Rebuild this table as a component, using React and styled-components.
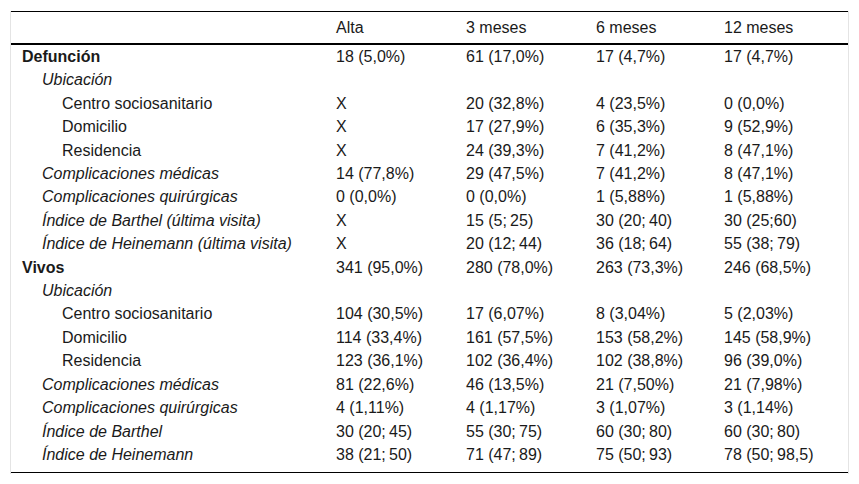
import React from "react";
import styled, { createGlobalStyle } from "styled-components";

const Global = createGlobalStyle`
  html, body {
    margin: 0;
    padding: 0;
    background: #ffffff;
  }
  body {
    font-family: "Liberation Sans", Arial, sans-serif;
    color: #1a1a1a;
  }
`;

const Frame = styled.div`
  margin: 11px 10px 0 10px;
  width: 837px;
  border-left: 1px solid #e4e4e4;
  border-right: 1px solid #e4e4e4;
  padding-bottom: 1px;
`;

const Table = styled.table`
  width: 837px;
  table-layout: fixed;
  border-collapse: collapse;
  border-top: 1px solid #000;
  border-bottom: 1px solid #000;
  font-size: 16px;
  color: #1a1a1a;
`;

const HeadCell = styled.th`
  text-align: left;
  font-weight: normal;
  padding: 6px 11px;
  line-height: 19px;
  border-bottom: 2px solid #000;
  white-space: nowrap;
`;

const Row = styled.tr`
  &:last-child td {
    padding-bottom: 8px;
  }
`;

const LabelCell = styled.td`
  padding: 2px 11px 2px ${(p) => 11 + p.$indent * 20}px;
  line-height: 19.4px;
  font-weight: ${(p) => (p.$kind === "group" ? "bold" : "normal")};
  font-style: ${(p) => (p.$kind === "sub" ? "italic" : "normal")};
  white-space: nowrap;
`;

const ValueCell = styled.td`
  padding: 2px 11px;
  line-height: 19.4px;
  white-space: nowrap;
`;

const T = "\u2009";

const headers = ["", "Alta", "3 meses", "6 meses", "12 meses"];
const widths = [314, 130, 130, 128, 135];

const rows = [
  { label: "Defunción", kind: "group", indent: 0, v: ["18 (5,0%)", "61 (17,0%)", "17 (4,7%)", "17 (4,7%)"] },
  { label: "Ubicación", kind: "sub", indent: 1, v: ["", "", "", ""] },
  { label: "Centro sociosanitario", kind: "item", indent: 2, v: ["X", "20 (32,8%)", "4 (23,5%)", "0 (0,0%)"] },
  { label: "Domicilio", kind: "item", indent: 2, v: ["X", "17 (27,9%)", "6 (35,3%)", "9 (52,9%)"] },
  { label: "Residencia", kind: "item", indent: 2, v: ["X", "24 (39,3%)", "7 (41,2%)", "8 (47,1%)"] },
  { label: "Complicaciones médicas", kind: "sub", indent: 1, v: ["14 (77,8%)", "29 (47,5%)", "7 (41,2%)", "8 (47,1%)"] },
  { label: "Complicaciones quirúrgicas", kind: "sub", indent: 1, v: ["0 (0,0%)", "0 (0,0%)", "1 (5,88%)", "1 (5,88%)"] },
  { label: "Índice de Barthel (última visita)", kind: "sub", indent: 1, v: ["X", `15 (5;${T}25)`, `30 (20;${T}40)`, "30 (25;60)"] },
  { label: "Índice de Heinemann (última visita)", kind: "sub", indent: 1, v: ["X", `20 (12;${T}44)`, `36 (18;${T}64)`, `55 (38;${T}79)`] },
  { label: "Vivos", kind: "group", indent: 0, v: ["341 (95,0%)", "280 (78,0%)", "263 (73,3%)", "246 (68,5%)"] },
  { label: "Ubicación", kind: "sub", indent: 1, v: ["", "", "", ""] },
  { label: "Centro sociosanitario", kind: "item", indent: 2, v: ["104 (30,5%)", "17 (6,07%)", "8 (3,04%)", "5 (2,03%)"] },
  { label: "Domicilio", kind: "item", indent: 2, v: ["114 (33,4%)", "161 (57,5%)", "153 (58,2%)", "145 (58,9%)"] },
  { label: "Residencia", kind: "item", indent: 2, v: ["123 (36,1%)", "102 (36,4%)", "102 (38,8%)", "96 (39,0%)"] },
  { label: "Complicaciones médicas", kind: "sub", indent: 1, v: ["81 (22,6%)", "46 (13,5%)", "21 (7,50%)", "21 (7,98%)"] },
  { label: "Complicaciones quirúrgicas", kind: "sub", indent: 1, v: ["4 (1,11%)", "4 (1,17%)", "3 (1,07%)", "3 (1,14%)"] },
  { label: "Índice de Barthel", kind: "sub", indent: 1, v: [`30 (20;${T}45)`, `55 (30;${T}75)`, `60 (30;${T}80)`, `60 (30;${T}80)`] },
  { label: "Índice de Heinemann", kind: "sub", indent: 1, v: [`38 (21;${T}50)`, `71 (47;${T}89)`, `75 (50;${T}93)`, `78 (50;${T}98,5)`] },
];

export default function App() {
  return (
    <>
      <Global />
      <Frame>
        <Table>
          <colgroup>
            {widths.map((w, i) => (
              <col key={i} style={{ width: w }} />
            ))}
          </colgroup>
          <thead>
            <tr>
              {headers.map((h, i) => (
                <HeadCell key={i}>{h}</HeadCell>
              ))}
            </tr>
          </thead>
          <tbody>
            {rows.map((r, i) => (
              <Row key={i}>
                <LabelCell $kind={r.kind} $indent={r.indent}>
                  {r.label}
                </LabelCell>
                {r.v.map((v, j) => (
                  <ValueCell key={j}>{v}</ValueCell>
                ))}
              </Row>
            ))}
          </tbody>
        </Table>
      </Frame>
    </>
  );
}
